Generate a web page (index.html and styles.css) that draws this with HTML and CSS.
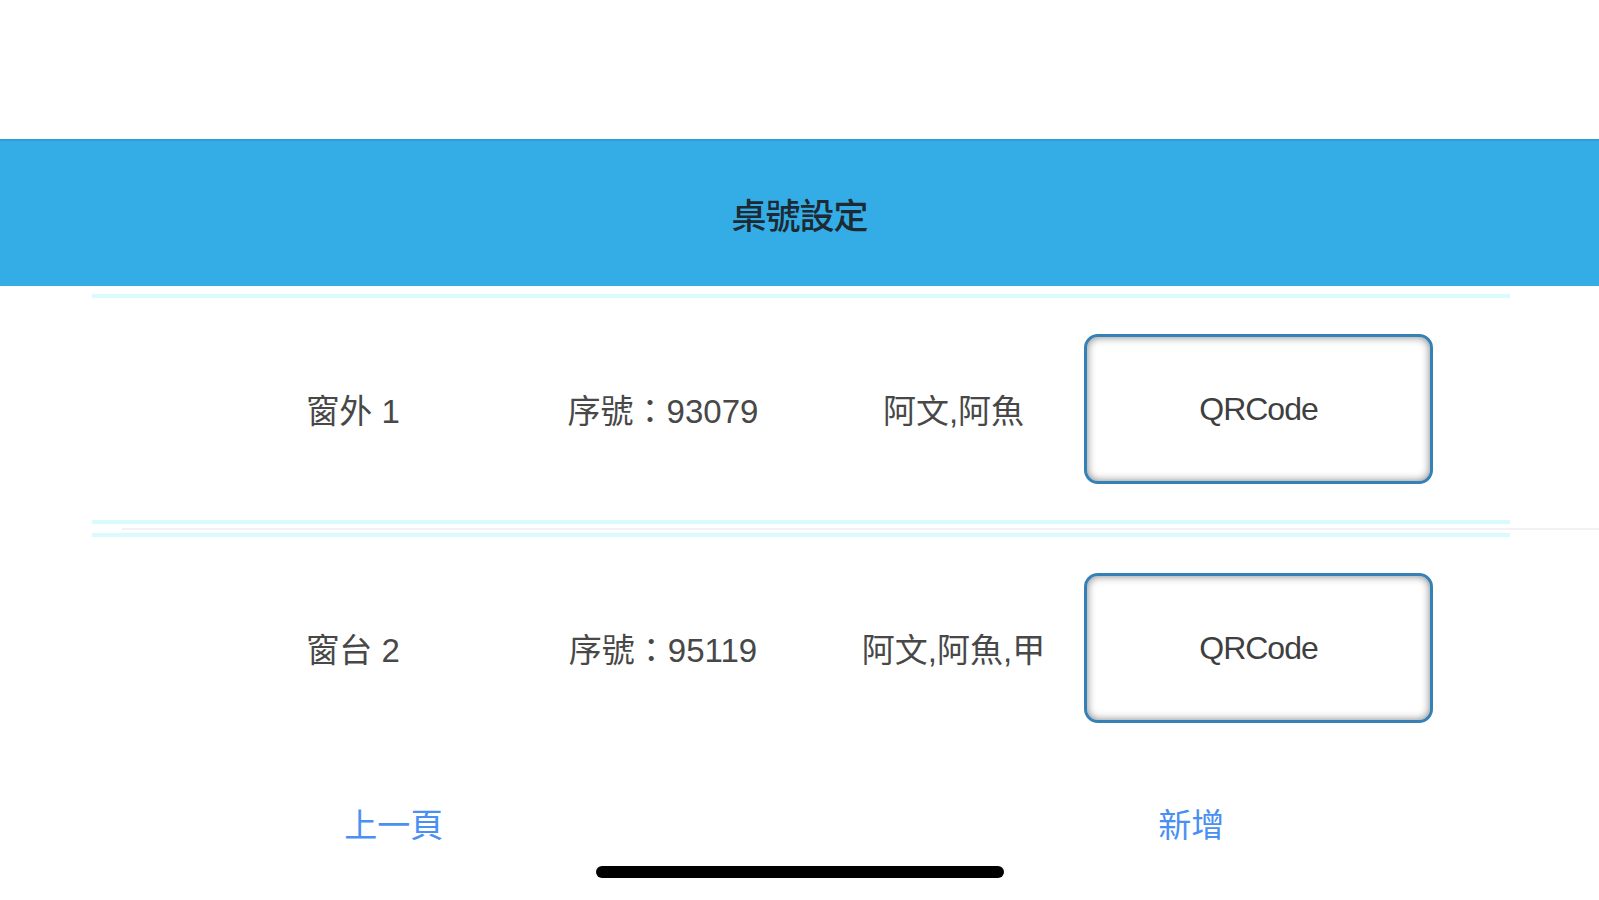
FILE: index.html
```html
<!DOCTYPE html>
<html lang="zh-Hant">
<head>
  <meta charset="UTF-8">
  <title>桌號設定</title>
  <link rel="stylesheet" href="styles.css">
</head>
<body>

  <div class="status-space"></div>

  <header class="nav-bar">
    <h1>桌號設定</h1>
  </header>

  <div class="table-list">
    <div class="row first">
      <div class="cell name">窗外 1</div>
      <div class="cell serial">序號：93079</div>
      <div class="cell staff">阿文,阿魚</div>
      <button class="qr-btn">QRCode</button>
    </div>
    <div class="separator"></div>
    <div class="row">
      <div class="cell name">窗台 2</div>
      <div class="cell serial">序號：95119</div>
      <div class="cell staff">阿文,阿魚,甲</div>
      <button class="qr-btn">QRCode</button>
    </div>
  </div>

  <footer class="actions">
    <div class="links">
      <a class="link">上一頁</a>
      <a class="link">新增</a>
    </div>
    <div class="home-indicator"></div>
  </footer>

</body>
</html>
```

FILE: styles.css
```css
body {
  margin: 0;
  width: 1599px;
  height: 900px;
  overflow: hidden;
  background-color: #ffffff;
  font-family: "Liberation Sans", "Noto Sans CJK TC", sans-serif;
  color: #484848;
}

.status-space {
  height: 139px;
}

.nav-bar {
  height: 147px;
  background-color: #34ade6;
  border-top: 2px solid #2b9fd9;
  box-sizing: border-box;
  display: flex;
  align-items: center;
  justify-content: center;
}

.nav-bar h1 {
  margin: 0;
  font-size: 35px;
  font-weight: 500;
  color: #1d2a33;
  letter-spacing: -1px;
}

.table-list {
  margin: 8px 89px 0 92px;
  display: flex;
  flex-direction: column;
}

.row {
  height: 226px;
  box-sizing: border-box;
  border-top: 4px solid #d9fbfd;
  display: grid;
  grid-template-columns: 111px 300px 320px 261px 349px;
  align-items: center;
}

.row.first {
  border-bottom: 4px solid #d9fbfd;
  height: 230px;
}

.cell {
  font-size: 33px;
  text-align: center;
  white-space: nowrap;
}

.name {
  grid-column: 2;
}

.separator {
  height: 9px;
  margin: 0 -89px 0 30px;
  display: flex;
  align-items: center;
}

.separator::after {
  content: "";
  flex: 1;
  height: 2px;
  background-color: #f3f1f3;
}

.qr-btn {
  height: 150px;
  width: 349px;
  background-color: #ffffff;
  border: 3px solid #3580b4;
  border-radius: 14px;
  box-shadow: inset 0 0 9px rgba(0, 0, 0, 0.5);
  font-family: "Liberation Sans", sans-serif;
  font-size: 32px;
  color: #3f3f3f;
  letter-spacing: -1px;
  padding: 0;
}

.actions {
  display: flex;
  flex-direction: column;
  align-items: center;
}

.links {
  width: 100%;
  display: grid;
  grid-template-columns: 1fr 1fr;
  padding-top: 47px;
}

.link {
  text-align: center;
  font-size: 33px;
  line-height: 40px;
  color: #4a90f2;
  cursor: pointer;
}

.link:first-child {
  padding-right: 12px;
}

.link:last-child {
  padding-right: 16px;
}

.home-indicator {
  margin-top: 20px;
  width: 408px;
  height: 12px;
  border-radius: 6px;
  background-color: #000000;
}
```
